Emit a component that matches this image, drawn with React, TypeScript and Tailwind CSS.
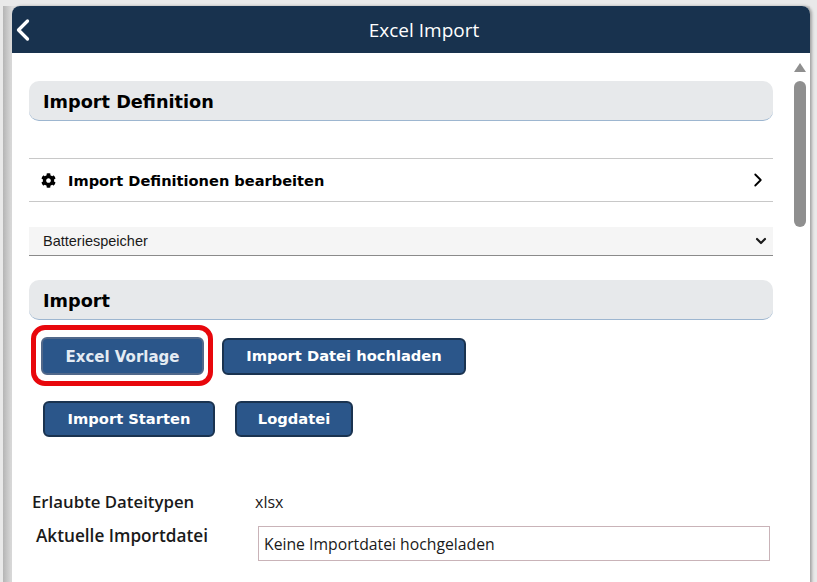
import { ChevronDown, ChevronLeft, ChevronRight } from 'lucide-react';
import { FaCog } from 'react-icons/fa';

const buttonBase = 'flex items-center justify-center rounded-md border-2 bg-[#2b568a] font-bold';
const buttonClass = `${buttonBase} border-[#1a3350] text-[14.7px] text-white`;

function SectionTitle({ title, className }: { title: string; className?: string }) {
  return (
    <div
      className={`flex h-10 items-center rounded-[10px] border-b border-[#9db6d0] bg-[#e7e9eb] px-3.5 pt-[4px] text-[17.7px] font-bold text-black ${className ?? ''}`}
    >
      {title}
    </div>
  );
}

export default function App() {
  return (
    <div className="h-[582px] w-[817px] overflow-hidden bg-[#e9e9e9] pl-[3px] pt-[6px] font-['DejaVu_Sans',sans-serif]">
      <div className="flex h-[600px] w-[807px] pl-[9px] bg-gradient-to-r from-[#b5b5b5] to-[#dcdcdc] to-[9px]">
        <div className="flex h-full w-[798px] flex-col overflow-hidden rounded-t-lg bg-white shadow-[2px_0_3px_rgba(0,0,0,0.3)]">
          <header className="relative flex h-[47px] shrink-0 items-center justify-center bg-[#18324e] text-white">
            <ChevronLeft className="absolute -left-[7px] top-[6px] h-[36px] w-[36px]" strokeWidth={2.2} />
            <span className="ml-[26px] pt-[2px] font-['Open_Sans',sans-serif] text-[19px]">Excel Import</span>
          </header>

          <div className="flex min-h-0 flex-1">
            <main className="w-[744px] ml-[17px] shrink-0 pt-[28px]">
              <SectionTitle title="Import Definition" />

              <div className="mt-[37px] flex h-[44px] items-center border-y border-[#c8c8c8] pl-3 pr-[4px] text-[14.6px] font-bold text-black">
                <FaCog className="h-[15px] w-[15px]" />
                <span className="ml-3 pt-[2px]">Import Definitionen bearbeiten</span>
                <ChevronRight className="ml-auto h-[22px] w-[22px]" strokeWidth={2} />
              </div>

              <div className="mt-[25px] flex h-[29px] items-center border-b border-[#8a8a8a] bg-[#f5f5f5] pl-3.5 pr-[4px] font-['Liberation_Sans',sans-serif] text-[14.5px] text-[#1a1a1a]">
                <span className="pt-[2px]">Batteriespeicher</span>
                <ChevronDown className="ml-auto h-[16px] w-[16px]" strokeWidth={3.2} />
              </div>

              <SectionTitle title="Import" className="mt-[24px]" />

              <div className="ml-[12px] mt-[17px] flex items-center gap-[18px]">
                <div className="relative">
                  <div className={`${buttonBase} h-[38px] w-[163px] border-[#51688a] pt-[3px] text-[15px] text-[#e4ebf3]`}>
                    Excel Vorlage
                  </div>
                  <div className="absolute -bottom-[11px] -left-[10px] -right-[9px] -top-[12px] rounded-[14px] border-[5px] border-[#e8070c]" />
                </div>
                <div className={`${buttonClass} h-[37px] w-[244px]`}>Import Datei hochladen</div>
              </div>

              <div className="ml-[14px] mt-[26px] flex gap-5">
                <div className={`${buttonClass} h-[36px] w-[172px]`}>Import Starten</div>
                <div className={`${buttonClass} h-[36px] w-[118px]`}>Logdatei</div>
              </div>

              <div className="ml-[3px] mt-[56px] flex h-[18px] items-center font-['Open_Sans',sans-serif] text-[16px] text-[#1a1a1a]">
                <span className="w-[223px] text-[16.8px] font-semibold">Erlaubte Dateitypen</span>
                <span>xlsx</span>
              </div>

              <div className="mt-[15px] flex items-start font-['Open_Sans',sans-serif] text-[15.75px] text-[#1a1a1a]">
                <span className="ml-[7px] w-[222px] text-[17.2px] font-semibold leading-[20px]">Aktuelle Importdatei</span>
                <div className="flex h-[35px] w-[512px] items-center border border-[#c9b3b8] px-[5px] pt-[2px]">
                  Keine Importdatei hochgeladen
                </div>
              </div>
            </main>

            <div className="ml-[21px] flex w-[12px] shrink-0 flex-col items-center pt-[10px]">
              <div className="h-0 w-0 border-x-[6px] border-b-[9px] border-x-transparent border-b-[#8f8f8f]" />
              <div className="mt-[9px] h-[146px] w-[12px] rounded-md bg-[#8f8f8f]" />
            </div>
          </div>
        </div>
      </div>
    </div>
  );
}
